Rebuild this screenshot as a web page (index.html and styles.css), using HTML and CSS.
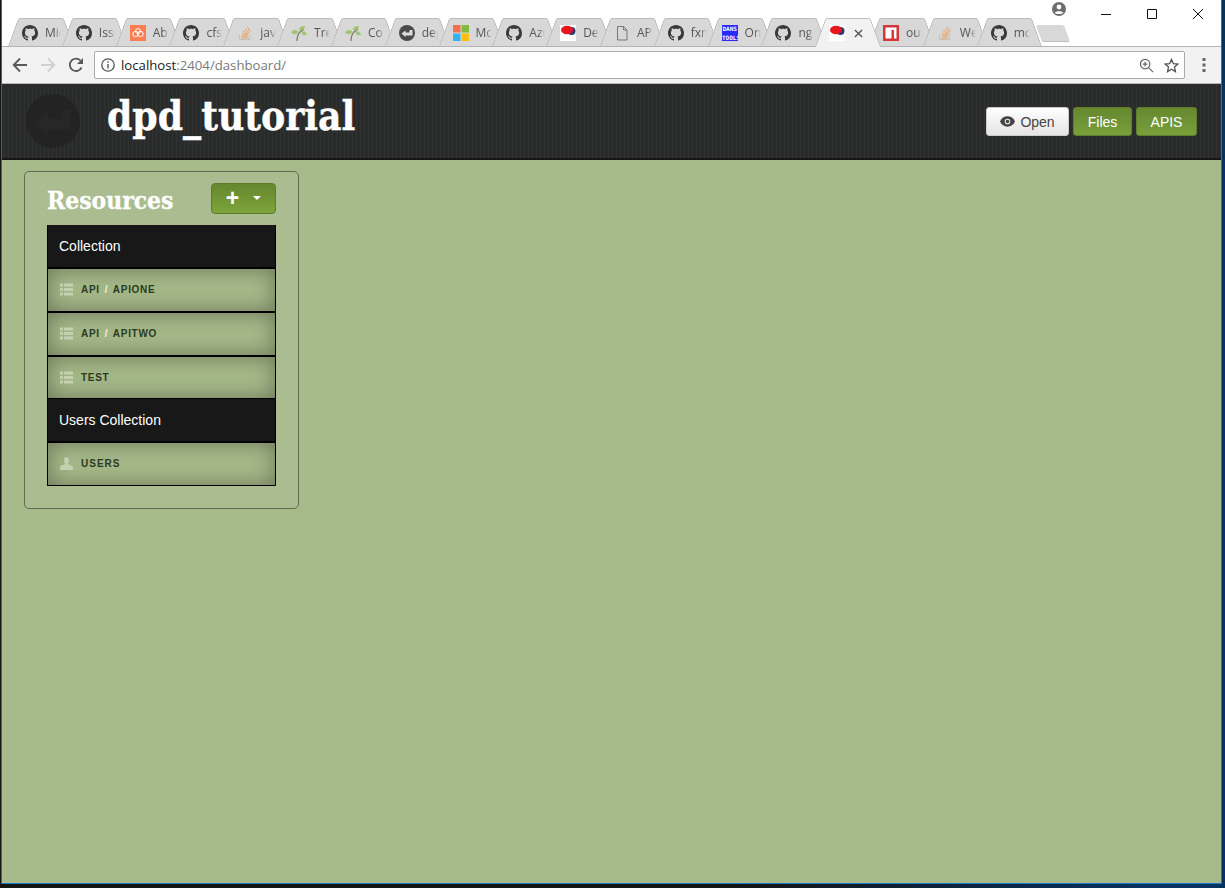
FILE: index.html
```html
<!DOCTYPE html>
<html lang="en">
<head>
<meta charset="utf-8">
<title>dpd_tutorial</title>
<link rel="stylesheet" href="styles.css">
</head>
<body>
<svg class="defs" width="0" height="0" aria-hidden="true">
  <symbol id="gh" viewBox="0 0 16 16"><path fill="#3a3a3a" d="M8 0C3.58 0 0 3.58 0 8c0 3.54 2.29 6.53 5.47 7.59.4.07.55-.17.55-.38 0-.19-.01-.82-.01-1.49-2.01.37-2.53-.49-2.69-.94-.09-.23-.48-.94-.82-1.13-.28-.15-.68-.52-.01-.53.63-.01 1.08.58 1.23.82.72 1.21 1.87.87 2.33.66.07-.52.28-.87.51-1.07-1.78-.2-3.64-.89-3.64-3.95 0-.87.31-1.59.82-2.15-.08-.2-.36-1.02.08-2.12 0 0 .67-.21 2.2.82.64-.18 1.32-.27 2-.27.68 0 1.36.09 2 .27 1.53-1.04 2.2-.82 2.2-.82.44 1.1.16 1.92.08 2.12.51.56.82 1.27.82 2.15 0 3.07-1.87 3.75-3.65 3.95.29.25.54.73.54 1.48 0 1.07-.01 1.93-.01 2.2 0 .21.15.46.55.38A8.013 8.013 0 0016 8c0-4.42-3.58-8-8-8z"/></symbol>
  <symbol id="so" viewBox="0 0 16 16"><path fill="none" stroke="#c4bfb4" stroke-width="1" d="M2.500 10v4.500h10V10"/><path fill="none" stroke="#f39a4d" stroke-width="1" d="M4.500 12.800h6M4.700 10.600l5.900.6M5.200 8.300l5.700 1.600M6.300 5.900l5.100 2.900M8 3.800l4.300 4M10.200 1.800l3 4.800"/></symbol>
  <symbol id="leaf" viewBox="0 0 16 16"><path fill="none" stroke="#77745a" stroke-width="1.100" d="M6 16c0-4 1-7 3-9 1-1 2-2 4-3"/><path fill="#a3c56f" d="M0 7.500c2-3.500 5.500-3 7.500-1-1.500 3.500-5 3.500-7.500 1zM8 4.500C8 2 10.500 .5 14 1c0 3-2.500 5-6 3.500zM10.500 6.500c2.500-1 4.500 0 5.500 3.500-3 1-5.500 0-5.500-3.500z"/></symbol>
  <symbol id="dpd" viewBox="0 0 16 16"><circle cx="8" cy="8" r="8" fill="#4a4a4a"/><path fill="#ddd" d="M2.500 8.500l4-3v2h4V5h3v5.500h-7V12z"/></symbol>
  <symbol id="ball" viewBox="0 0 16 16"><rect width="16" height="16" fill="#fff"/><circle cx="11.500" cy="6" r="4" fill="#2b3a78"/><ellipse cx="7" cy="5" rx="6" ry="4.200" fill="#e8151d"/></symbol>
  <symbol id="bars" viewBox="0 0 13 12"><path fill="#c5cfb2" d="M0 0h3v3H0zM4 0h9v3H4zM0 4.500h3v3H0zM4 4.500h9v3H4zM0 9h3v3H0zM4 9h9v3H4z"/></symbol>
</svg>

<div class="desktop">
  <div class="window">
    <div class="chrome">
      <div class="tabstrip">
        <div class="tab"><svg class="fav"><use href="#gh"/></svg><span class="tab-label">Mic</span></div>
        <div class="tab"><svg class="fav"><use href="#gh"/></svg><span class="tab-label">Issu</span></div>
        <div class="tab"><svg class="fav" viewBox="0 0 16 16"><rect width="16" height="16" fill="#fb7d52"/><g fill="none" stroke="#fff" stroke-width="1"><circle cx="5.500" cy="9" r="2.700"/><circle cx="10.500" cy="9" r="2.700"/><circle cx="8" cy="6" r="2.400"/></g></svg><span class="tab-label">Ab</span></div>
        <div class="tab"><svg class="fav"><use href="#gh"/></svg><span class="tab-label">cfs</span></div>
        <div class="tab"><svg class="fav"><use href="#so"/></svg><span class="tab-label">jav</span></div>
        <div class="tab"><svg class="fav"><use href="#leaf"/></svg><span class="tab-label">Tre</span></div>
        <div class="tab"><svg class="fav"><use href="#leaf"/></svg><span class="tab-label">Co</span></div>
        <div class="tab"><svg class="fav"><use href="#dpd"/></svg><span class="tab-label">dep</span></div>
        <div class="tab"><svg class="fav" viewBox="0 0 16 16"><path fill="#f3704d" d="M0 0h7.500v7.500H0z"/><path fill="#80bc41" d="M8.500 0H16v7.500H8.500z"/><path fill="#33b3ef" d="M0 8.500h7.500V16H0z"/><path fill="#fdbd11" d="M8.500 8.500H16V16H8.500z"/></svg><span class="tab-label">Mc</span></div>
        <div class="tab"><svg class="fav"><use href="#gh"/></svg><span class="tab-label">Azu</span></div>
        <div class="tab"><svg class="fav"><use href="#ball"/></svg><span class="tab-label">De</span></div>
        <div class="tab"><svg class="fav" viewBox="0 0 16 16"><path fill="none" stroke="#777" d="M3.500 1.500h6l3.500 3.500v10h-9.500zM9.500 1.500V5H13"/></svg><span class="tab-label">AP</span></div>
        <div class="tab"><svg class="fav"><use href="#gh"/></svg><span class="tab-label">fxn</span></div>
        <div class="tab"><svg class="fav" viewBox="0 0 16 16"><rect width="16" height="16" fill="#2a2af5"/><g class="dans"><text x="0.500" y="6">DANS</text><text x="0" y="14.500">TOOLS</text></g></svg><span class="tab-label">On</span></div>
        <div class="tab"><svg class="fav"><use href="#gh"/></svg><span class="tab-label">ng</span></div>
        <div class="tab tab-active"><svg class="fav"><use href="#ball"/></svg><svg class="tab-close" viewBox="0 0 10 10"><path fill="none" stroke="#555" stroke-width="1.500" d="M1 1l8 8M9 1l-8 8"/></svg></div>
        <div class="tab"><svg class="fav" viewBox="0 0 16 16"><rect width="16" height="16" fill="#d5373b"/><path fill="#fff" d="M2.500 2.500h11v11h-2.500V5H8.500v8.500h-6z"/></svg><span class="tab-label">out</span></div>
        <div class="tab"><svg class="fav"><use href="#so"/></svg><span class="tab-label">We</span></div>
        <div class="tab"><svg class="fav"><use href="#gh"/></svg><span class="tab-label">mc</span></div>
        <div class="newtab"></div>
      </div>
      <div class="winctl">
        <svg class="profile" viewBox="0 0 14 14"><circle cx="7" cy="7" r="7" fill="#6e6e6e"/><circle cx="7" cy="5" r="2.400" fill="#fff"/><path fill="#fff" d="M2.800 10.800c1-2 7.400-2 8.400 0-1 1.600-7.400 1.600-8.400 0z"/></svg>
        <svg class="ctl" viewBox="0 0 46 20"><path stroke="#111" stroke-width="1" d="M18 10.500h10"/></svg>
        <svg class="ctl" viewBox="0 0 46 20"><path fill="none" stroke="#111" d="M18.500 5.500h9v9h-9z"/></svg>
        <svg class="ctl" viewBox="0 0 46 20"><path fill="none" stroke="#111" d="M18 5l10 10M28 5L18 15"/></svg>
      </div>
      <div class="toolbar">
        <svg class="tool" viewBox="0 0 16 16"><path fill="none" stroke="#5a5a5a" stroke-width="1.800" d="M15 8H2M8 1.500L1.700 8 8 14.500"/></svg>
        <svg class="tool" viewBox="0 0 16 16"><path fill="none" stroke="#cfcfcf" stroke-width="1.800" d="M1 8h13M8 1.500L14.300 8 8 14.500"/></svg>
        <svg class="tool" viewBox="0 0 16 16"><path fill="none" stroke="#5a5a5a" stroke-width="1.800" d="M13.600 10.500A6.200 6.200 0 1 1 12.500 3.500"/><path fill="#5a5a5a" d="M15 1v6H9z"/></svg>
        <div class="urlbar">
          <svg class="info" viewBox="0 0 14 14"><circle cx="7" cy="7" r="6.200" fill="none" stroke="#555" stroke-width="1.300"/><path fill="#555" d="M6.300 6h1.400v4.500H6.300zM6.300 3.300h1.400v1.400H6.300z"/></svg>
          <span class="url"><span class="url-host">localhost</span>:2404/dashboard/</span>
          <svg class="urlicon" viewBox="0 0 16 16"><circle cx="6.500" cy="6.500" r="5" fill="none" stroke="#666" stroke-width="1.300"/><path fill="none" stroke="#666" stroke-width="1.300" d="M10.200 10.200l4.800 4.800M4 6.500h5M6.500 4v5"/></svg>
          <svg class="urlicon" viewBox="0 0 16 16"><path fill="none" stroke="#555" stroke-width="1.400" d="M8 1.500l2 4.500 4.800.5-3.600 3.200 1 4.800L8 12l-4.200 2.500 1-4.800L1.200 6.500 6 6z"/></svg>
        </div>
        <svg class="dots" viewBox="0 0 4 14"><path fill="#666" d="M.5 0h3v3h-3zM.5 5.500h3v3h-3zM.5 11h3v3h-3z"/></svg>
      </div>
    </div>

    <header class="appbar">
      <svg class="logo" viewBox="0 0 54 54"><circle cx="27" cy="27" r="27" fill="#232323"/><path fill="#272727" d="M9 29l13-11v7h13v-9h10v19H22v6z"/></svg>
      <h1 class="app-title">dpd_tutorial</h1>
      <nav class="actions">
        <a class="btn btn-light"><svg class="eye" viewBox="0 0 16 11"><path fill="#444" d="M8 0C4.500 0 1.500 2 0 5.500 1.500 9 4.500 11 8 11s6.500-2 8-5.500C14.500 2 11.500 0 8 0z"/><circle cx="8" cy="5.500" r="3" fill="#eee"/><circle cx="8" cy="5.500" r="1.900" fill="#444"/></svg>Open</a>
        <a class="btn btn-green btn-files">Files</a>
        <a class="btn btn-green btn-apis">APIS</a>
      </nav>
    </header>

    <main class="content">
      <section class="panel">
        <div class="panel-head">
          <h2 class="panel-title">Resources</h2>
          <button class="add" type="button"><span class="plus">+</span><span class="caret"></span></button>
        </div>
        <div class="list">
          <div class="row row-group">Collection</div>
          <div class="row row-item"><svg class="bars"><use href="#bars"/></svg><span class="item-label">API <i>/</i> APIONE</span></div>
          <div class="row row-item"><svg class="bars"><use href="#bars"/></svg><span class="item-label">API <i>/</i> APITWO</span></div>
          <div class="row row-item row-thin"><svg class="bars"><use href="#bars"/></svg><span class="item-label">TEST</span></div>
          <div class="row row-group">Users Collection</div>
          <div class="row row-item row-end"><svg class="bars" viewBox="0 0 13 13"><path fill="#c5cfb2" d="M4 3c0-4 5-4 5 0 0 2-1 3-1 4 1 1 5 1 5 4v2H0v-2c0-3 4-3 5-4 0-1-1-2-1-4z"/></svg><span class="item-label item-wide">USERS</span></div>
        </div>
      </section>
    </main>
  </div>
</div>
</body>
</html>
```
FILE: styles.css
```css
* { box-sizing: border-box; }
html, body { margin: 0; height: 100%; }
body { font-family: "Liberation Sans", Arial, sans-serif; background: #10212f; overflow: hidden; }
.defs { position: absolute; }

.desktop {
  height: 888px;
  padding: 0 3px 4px 1px;
  background: linear-gradient(90deg, #141414 0 60%, #05325f 93%);
}
.window {
  height: 100%;
  display: flex;
  flex-direction: column;
  border-left: 1px solid #1b6fb8;
  border-right: 1px solid #1b78c8;
  border-bottom: 1px solid #1b78c8;
  background: #a7ba89;
}

/* browser chrome */
.chrome { position: relative; background: #fff; flex: none; }
.tabstrip {
  display: flex;
  height: 47px;
  padding: 18px 0 0 6px;
  border-bottom: 1px solid #b4b4b4;
}
.tab {
  position: relative;
  flex: none;
  width: 65px;
  height: 29px;
  margin-right: -11.200px;
  padding: 7px 0 0 14px;
  display: flex;
  align-items: flex-start;
  gap: 7px;
}
.tab::before, .tab::after {
  content: "";
  position: absolute;
  top: 0;
  bottom: 1px;
  width: 50%;
  background: #d8d8d8;
  border-top: 1px solid #bdbdbd;
  z-index: 0;
}
.tab::before { left: 0; transform-origin: bottom left; transform: skewX(-20deg); border-left: 1px solid #b2b2b2; border-top-left-radius: 2px; }
.tab::after { right: 0; transform-origin: bottom right; transform: skewX(20deg); border-right: 1px solid #b2b2b2; border-top-right-radius: 2px; }
.tab-active { z-index: 2; }
.tab-active::before, .tab-active::after { background: #f2f2f2; bottom: 0; }
.fav { position: relative; z-index: 1; flex: none; width: 16px; height: 16px; }
.tab-label {
  position: relative;
  z-index: 1;
  width: 16px;
  overflow: hidden;
  white-space: nowrap;
  font: 12px/16px "Open Sans", sans-serif;
  color: #555;
  -webkit-mask-image: linear-gradient(90deg, #000 60%, transparent);
  mask-image: linear-gradient(90deg, #000 60%, transparent);
}
.tab-close { position: relative; z-index: 1; width: 9px; height: 9px; margin: 4px 0 0 2px; }
.dans { font: bold 6px "DejaVu Sans Mono", monospace; fill: #fff; }
.newtab {
  flex: none;
  width: 28px;
  height: 17px;
  margin: 7px 0 0 9px;
  background: #d8d8d8;
  border-bottom: 1px solid #bdbdbd;
  border-radius: 2px;
  transform: skewX(20deg);
}
.winctl {
  position: absolute;
  top: 0;
  right: 0;
  display: flex;
  align-items: flex-start;
}
.profile { width: 14px; height: 14px; margin: 2px 17px 0 0; }
.ctl { width: 46px; height: 20px; margin-top: 4px; }
.toolbar {
  display: flex;
  align-items: center;
  height: 37px;
  padding: 0 15px 0 10px;
  background: #f2f2f2;
  border-bottom: 1px solid #b4b4b4;
}
.tool { flex: none; width: 16px; height: 16px; margin-right: 12px; }
.tool:nth-child(3) { margin-right: 10px; }
.urlbar {
  flex: 1;
  display: flex;
  align-items: center;
  height: 28px;
  padding: 0 5px 0 6px;
  background: #fff;
  border: 1px solid #ababab;
  border-radius: 2px;
}
.info { flex: none; width: 14px; height: 14px; margin-right: 6px; }
.url { flex: 1; font: 13.200px "Open Sans", sans-serif; color: #7a7a7a; }
.url-host { color: #222; }
.urlicon { flex: none; width: 15px; height: 15px; margin-left: 10px; }
.dots { flex: none; width: 4px; height: 14px; margin-left: 17px; }

/* app header */
.appbar {
  flex: none;
  display: flex;
  align-items: flex-start;
  height: 76px;
  padding: 10px 24px 0 24px;
  border-bottom: 2px solid #161616;
  background-color: #2b2c2c;
  background-image: repeating-linear-gradient(90deg, rgba(0,0,0,.09) 0 1px, transparent 1px 2px, rgba(255,255,255,.02) 2px 3px, transparent 3px 4px);
}
.logo { flex: none; width: 54px; height: 54px; margin-top: 0; }
.app-title {
  margin: 0 0 0 27px;
  font: bold 40.300px/44px "DejaVu Serif Condensed", "DejaVu Serif", serif;
  -webkit-text-stroke: .4px #fff;
  color: #fff;
}
.actions { display: flex; gap: 4px; margin: 13px 0 0 auto; }
.btn {
  display: flex;
  align-items: center;
  justify-content: center;
  height: 29px;
  border-radius: 3px;
  font-size: 14px;
}
.btn-light {
  width: 83px;
  gap: 5px;
  color: #444;
  background: linear-gradient(#fff, #e4e4e4);
  border: 1px solid #ccc;
}
.btn-green {
  color: #fff;
  background: linear-gradient(#66872f, #78a03a);
  border: 1px solid #5f7d2d;
}
.btn-files { width: 59px; }
.btn-apis { width: 61px; }
.eye { width: 15px; height: 11px; }

/* content */
.content { flex: 1; padding: 11px 0 0 22px; background: #a7ba89; }
.panel {
  width: 275px;
  padding: 11px 22px 22px;
  background: #abbc90;
  border: 1px solid #5f6e50;
  border-radius: 5px;
}
.panel-head {
  display: flex;
  justify-content: space-between;
  align-items: flex-start;
  height: 42px;
}
.panel-title {
  margin: 0;
  padding-top: 2px;
  font: bold 24.400px/32px "DejaVu Serif Condensed", "DejaVu Serif", serif;
  -webkit-text-stroke: .3px #fff;
  color: #fff;
}
.add {
  display: flex;
  align-items: center;
  justify-content: center;
  gap: 14px;
  width: 65px;
  height: 31px;
  padding: 0 0 1px;
  color: #fff;
  background: linear-gradient(#66872f, #7da43a);
  border: 1px solid #5d7b2b;
  border-radius: 4px;
}
.plus { font: bold 23px/24px "Liberation Sans", sans-serif; }
.caret { width: 0; height: 0; border: 4.500px solid transparent; border-top-color: #fff; border-bottom: 0; }
.list {
  border-left: 1px solid #000;
  border-right: 1px solid #000;
  border-bottom: 1px solid #000;
}
.row {
  display: flex;
  align-items: center;
  height: 44px;
  padding-left: 12px;
  border-bottom: 2px solid #000;
}
.row-group { padding-left: 11px; font-size: 14px; color: #fff; background: #181818; }
.row-item { padding-bottom: 1px; background: #a7ba89; box-shadow: inset 0 0 22px rgba(70,72,58,.62); }
.row-thin { height: 42px; padding-bottom: 0; border-bottom-width: 1px; }
.row-end { height: 42px; border-bottom: 0; }
.bars { flex: none; width: 13px; height: 13px; margin-right: 8px; }
.item-label {
  font-size: 10px;
  font-weight: bold;
  letter-spacing: .7px;
  color: #2b3a22;
}
.item-label i { font-style: normal; color: #eef1e4; margin: 0 1.500px; }
.item-wide { letter-spacing: 1px; }
```
